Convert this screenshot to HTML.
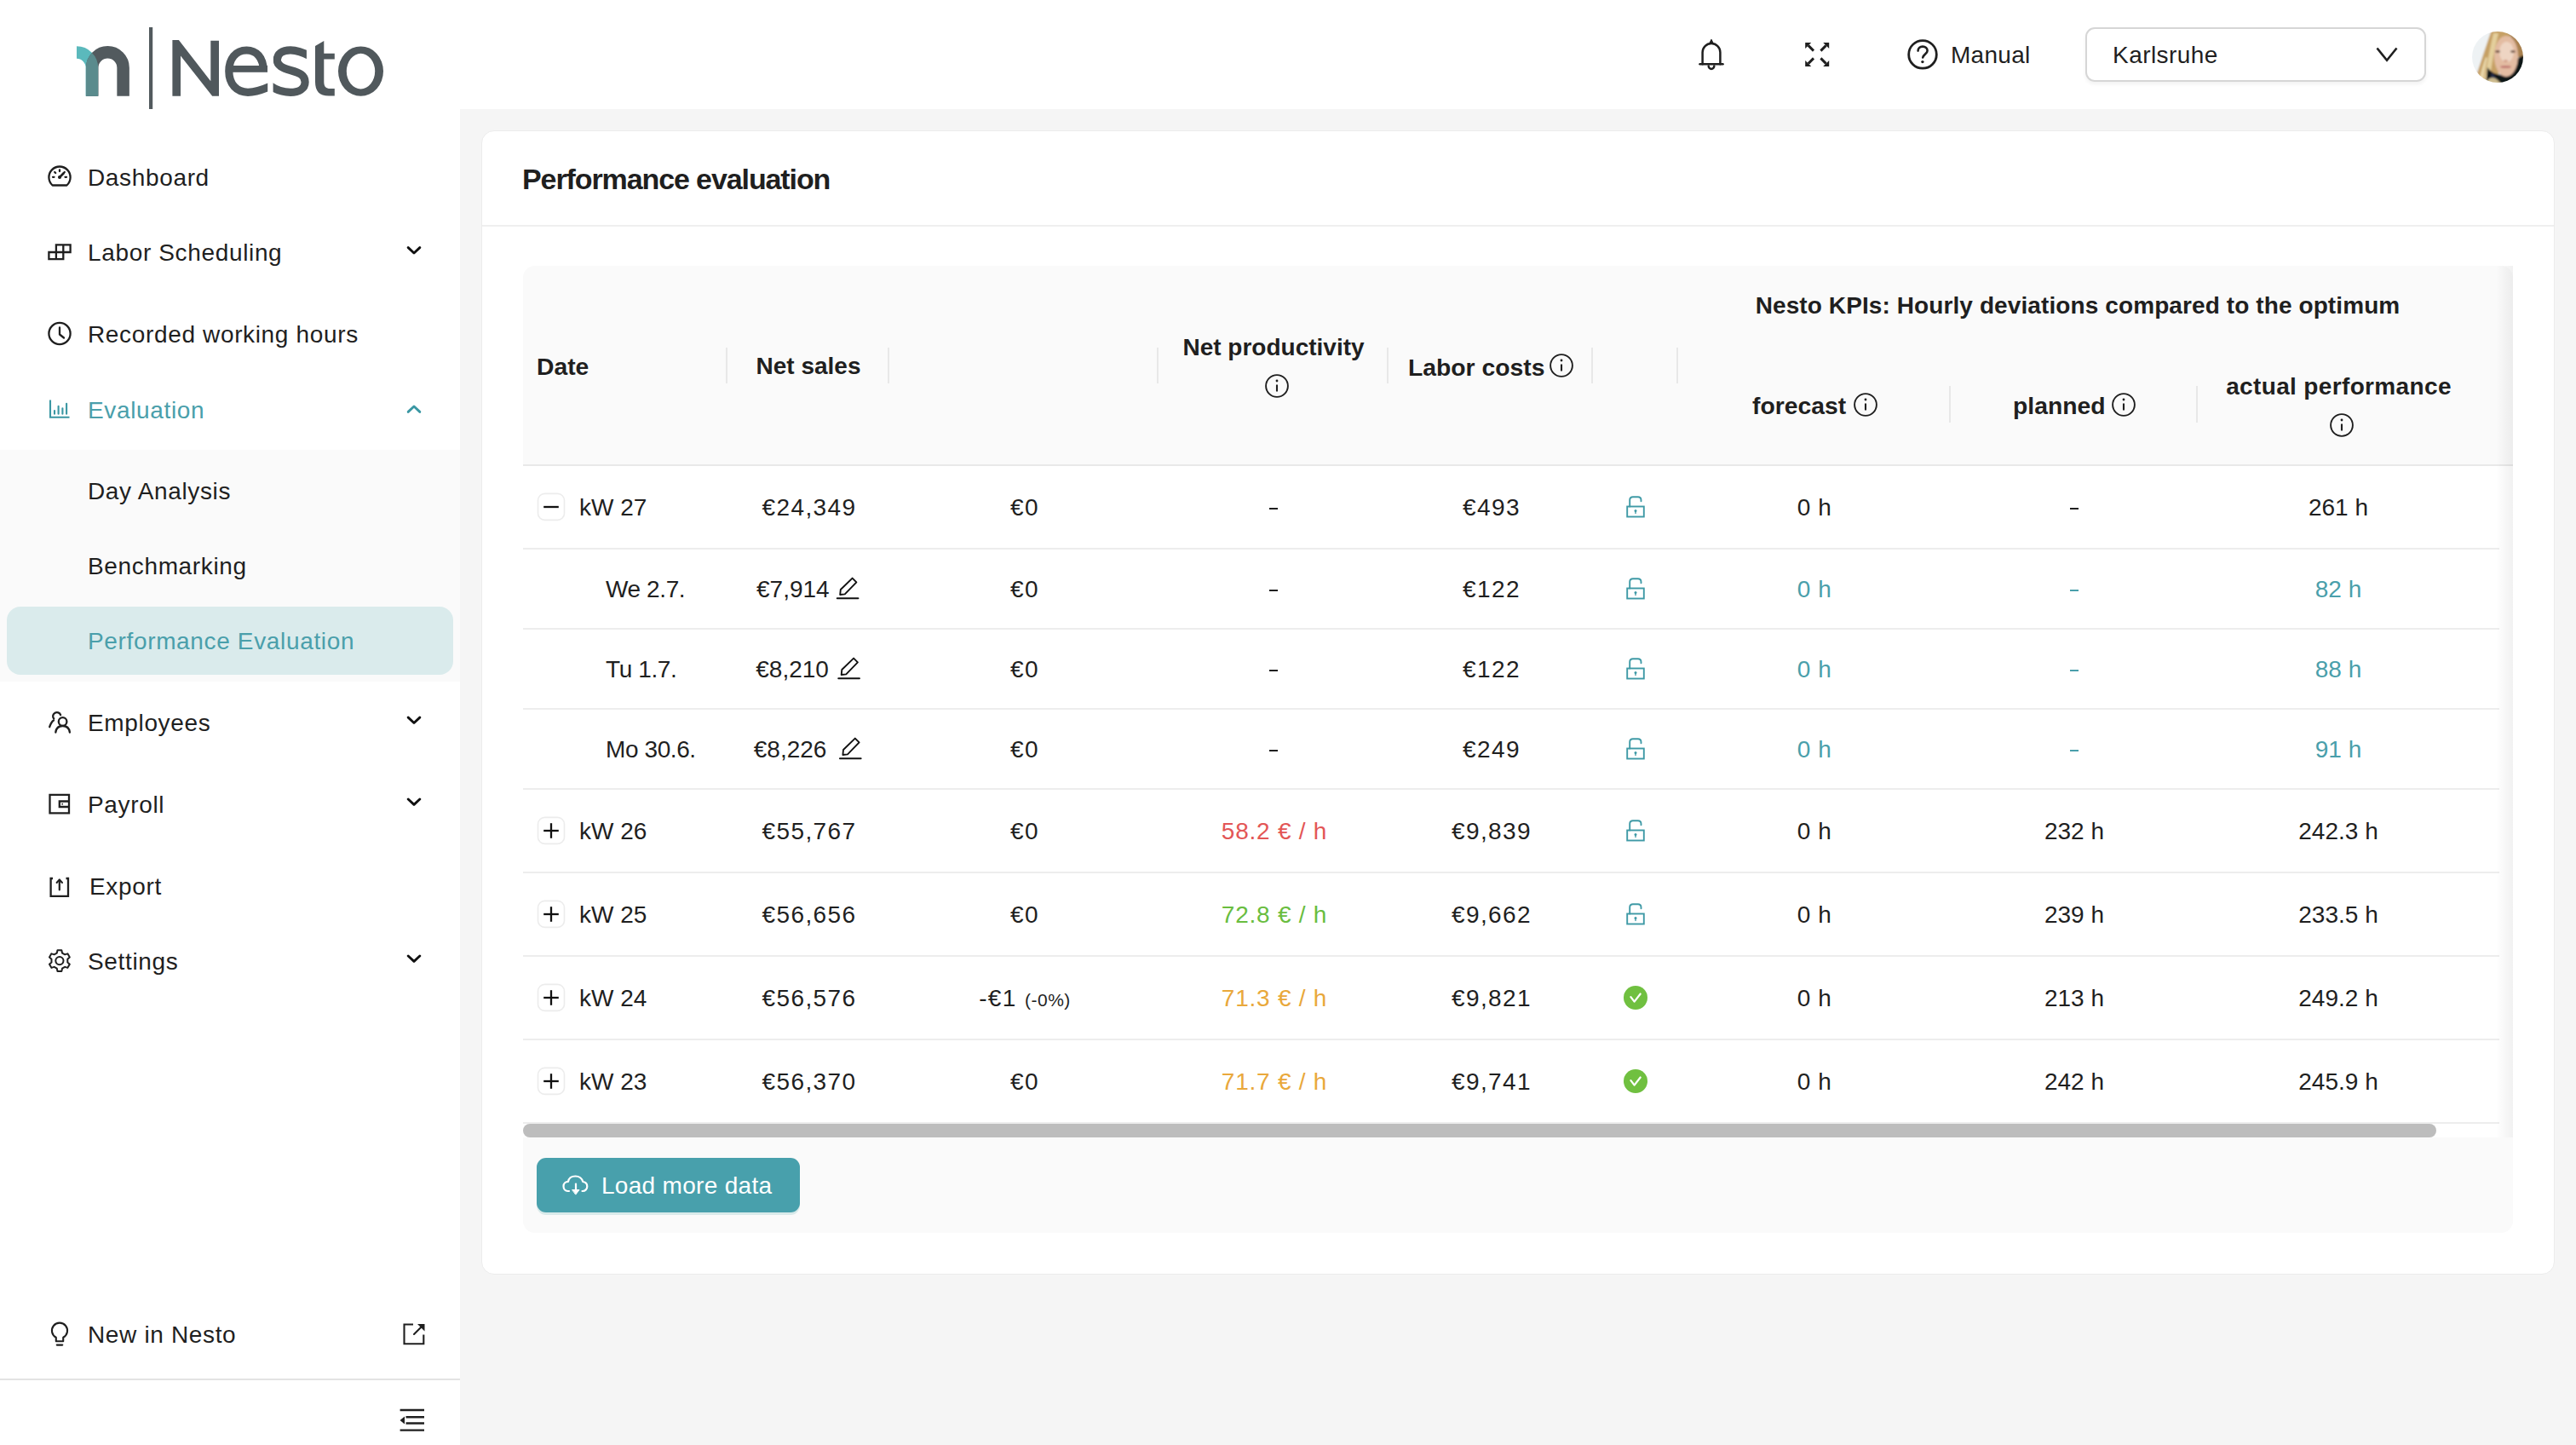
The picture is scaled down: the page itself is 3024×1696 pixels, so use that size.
<!DOCTYPE html>
<html><head><meta charset="utf-8">
<style>
*{box-sizing:border-box;margin:0;padding:0}
html,body{width:3024px;height:1696px;overflow:hidden;background:#f5f5f5;font-family:"Liberation Sans",sans-serif;color:#1f1f1f}
.abs{position:absolute}
.t{position:absolute;font-size:28px;line-height:40px;height:40px;white-space:nowrap}
.b{font-weight:700;font-size:28.3px}
.nav{letter-spacing:0.65px}
.teal{color:#4a9fab}
svg{position:absolute;overflow:visible}
.c{position:absolute;font-size:28px;line-height:40px;height:40px;white-space:nowrap;transform:translateX(-50%)}
.eur{letter-spacing:1.4px}
.sep{position:absolute;width:2px;background:#e8e8e8}
.dash{position:absolute;width:9.5px;height:2.3px;background:#1f1f1f}
</style></head><body>
<div class="abs" style="left:0;top:0;width:3024px;height:128px;background:#fff"></div>
<div class="abs" style="left:0;top:0;width:540px;height:1696px;background:#fff"></div>
<div class="abs" style="left:0;top:528px;width:540px;height:272px;background:#fafafa"></div>
<div class="abs" style="left:8px;top:712px;width:524px;height:80px;background:#daebec;border-radius:16px"></div>
<div class="abs" style="left:0;top:1618px;width:540px;height:2px;background:#e3e3e3"></div>
<div class="t nav" style="left:103px;top:189px">Dashboard</div>
<div class="t nav" style="left:103px;top:277px">Labor Scheduling</div>
<div class="t nav" style="left:103px;top:373px">Recorded working hours</div>
<div class="t nav teal" style="left:103px;top:462px">Evaluation</div>
<div class="t nav" style="left:103px;top:557px">Day Analysis</div>
<div class="t nav" style="left:103px;top:645px">Benchmarking</div>
<div class="t nav teal" style="left:103px;top:733px">Performance Evaluation</div>
<div class="t nav" style="left:103px;top:829px">Employees</div>
<div class="t nav" style="left:103px;top:925px">Payroll</div>
<div class="t nav" style="left:105px;top:1021px">Export</div>
<div class="t nav" style="left:103px;top:1109px">Settings</div>
<div class="t nav" style="left:103px;top:1547px">New in Nesto</div>
<div class="t" style="left:2290px;top:45px;letter-spacing:0.3px">Manual</div>
<div class="abs" style="left:2448px;top:32px;width:400px;height:64px;border:2px solid #d6d6d6;border-radius:11px;box-shadow:0 3px 4px rgba(0,0,0,0.05)"></div>
<div class="t" style="left:2480px;top:45px;letter-spacing:0.45px">Karlsruhe</div>
<div class="abs" style="left:565px;top:153px;width:2434px;height:1343px;background:#fff;border-radius:15px;border:1.5px solid #ececec"></div>
<div class="abs" style="left:566px;top:264px;width:2432px;height:2px;background:#efefef"></div>
<div class="t b" style="left:613px;top:190px;font-size:34px;letter-spacing:-1.1px">Performance evaluation</div>
<div class="abs" style="left:614px;top:312px;width:2336px;height:1135px;background:#fafafa;border-radius:14px"></div>
<div class="sep" style="left:852px;top:408px;height:42px"></div>
<div class="sep" style="left:1042px;top:408px;height:42px"></div>
<div class="sep" style="left:1358px;top:408px;height:42px"></div>
<div class="sep" style="left:1628px;top:408px;height:42px"></div>
<div class="sep" style="left:1868px;top:408px;height:42px"></div>
<div class="sep" style="left:1968px;top:408px;height:42px"></div>
<div class="sep" style="left:2288px;top:453px;height:43px"></div>
<div class="sep" style="left:2578px;top:453px;height:43px"></div>
<div class="abs" style="left:614px;top:545px;width:2336px;height:2px;background:#e9e9e9"></div>
<div class="t b" style="left:630px;top:410px">Date</div>
<div class="c b" style="left:949px;top:410px">Net sales</div>
<div class="c b" style="left:1495px;top:387.8px">Net productivity</div>
<div class="t b" style="left:1653px;top:410.5px">Labor costs</div>
<div class="c b" style="left:2439px;top:338.5px;letter-spacing:0.1px">Nesto KPIs: Hourly deviations compared to the optimum</div>
<div class="t b" style="left:2057px;top:456px">forecast</div>
<div class="t b" style="left:2363px;top:455.5px">planned</div>
<div class="c b" style="left:2745.5px;top:434px;letter-spacing:0.35px">actual performance</div>
<div class="abs" style="left:614px;top:547px;width:2336px;height:788px;background:#fff"></div>
<div class="abs" style="left:614px;top:643px;width:2320px;height:2px;background:#ededed"></div>
<div class="t" style="left:680px;top:576px">kW 27</div>
<div class="c eur" style="left:950px;top:576px">€24,349</div>
<div class="c eur" style="left:1203px;top:576px">€0</div>
<div class="dash" style="left:1490.25px;top:595.8px;background:#1f1f1f"></div>
<div class="c eur" style="left:1751px;top:576px">€493</div>
<div class="c" style="left:2130px;top:576px;letter-spacing:0.5px">0 h</div>
<div class="dash" style="left:2430.25px;top:595.8px;background:#1f1f1f"></div>
<div class="c" style="left:2745px;top:576px">261 h</div>
<div class="abs" style="left:614px;top:737px;width:2320px;height:2px;background:#ededed"></div>
<div class="t" style="left:711px;top:672px;letter-spacing:-0.4px">We 2.7.</div>
<div class="t" style="left:888px;top:672px;letter-spacing:0px">€7,914</div>
<div class="c eur" style="left:1203px;top:672px">€0</div>
<div class="dash" style="left:1490.25px;top:691.8px;background:#1f1f1f"></div>
<div class="c eur" style="left:1751px;top:672px">€122</div>
<div class="c teal" style="left:2130px;top:672px;letter-spacing:0.5px">0 h</div>
<div class="dash" style="left:2430.25px;top:691.8px;background:#4a9fab"></div>
<div class="c teal" style="left:2745px;top:672px">82 h</div>
<div class="abs" style="left:614px;top:831px;width:2320px;height:2px;background:#ededed"></div>
<div class="t" style="left:711px;top:766px;letter-spacing:-0.4px">Tu 1.7.</div>
<div class="t" style="left:887.3px;top:766px;letter-spacing:0px">€8,210</div>
<div class="c eur" style="left:1203px;top:766px">€0</div>
<div class="dash" style="left:1490.25px;top:785.8px;background:#1f1f1f"></div>
<div class="c eur" style="left:1751px;top:766px">€122</div>
<div class="c teal" style="left:2130px;top:766px;letter-spacing:0.5px">0 h</div>
<div class="dash" style="left:2430.25px;top:785.8px;background:#4a9fab"></div>
<div class="c teal" style="left:2745px;top:766px">88 h</div>
<div class="abs" style="left:614px;top:925px;width:2320px;height:2px;background:#ededed"></div>
<div class="t" style="left:711px;top:860px;letter-spacing:-0.4px">Mo 30.6.</div>
<div class="t" style="left:884.8px;top:860px;letter-spacing:0px">€8,226</div>
<div class="c eur" style="left:1203px;top:860px">€0</div>
<div class="dash" style="left:1490.25px;top:879.8px;background:#1f1f1f"></div>
<div class="c eur" style="left:1751px;top:860px">€249</div>
<div class="c teal" style="left:2130px;top:860px;letter-spacing:0.5px">0 h</div>
<div class="dash" style="left:2430.25px;top:879.8px;background:#4a9fab"></div>
<div class="c teal" style="left:2745px;top:860px">91 h</div>
<div class="abs" style="left:614px;top:1023px;width:2320px;height:2px;background:#ededed"></div>
<div class="t" style="left:680px;top:956px">kW 26</div>
<div class="c eur" style="left:950px;top:956px">€55,767</div>
<div class="c eur" style="left:1203px;top:956px">€0</div>
<div class="c" style="left:1496px;top:956px;color:#e35656;letter-spacing:0.75px">58.2 € / h</div>
<div class="c eur" style="left:1751px;top:956px">€9,839</div>
<div class="c" style="left:2130px;top:956px;letter-spacing:0.5px">0 h</div>
<div class="c" style="left:2435px;top:956px">232 h</div>
<div class="c" style="left:2745px;top:956px">242.3 h</div>
<div class="abs" style="left:614px;top:1121px;width:2320px;height:2px;background:#ededed"></div>
<div class="t" style="left:680px;top:1054px">kW 25</div>
<div class="c eur" style="left:950px;top:1054px">€56,656</div>
<div class="c eur" style="left:1203px;top:1054px">€0</div>
<div class="c" style="left:1496px;top:1054px;color:#69bd3f;letter-spacing:0.75px">72.8 € / h</div>
<div class="c eur" style="left:1751px;top:1054px">€9,662</div>
<div class="c" style="left:2130px;top:1054px;letter-spacing:0.5px">0 h</div>
<div class="c" style="left:2435px;top:1054px">239 h</div>
<div class="c" style="left:2745px;top:1054px">233.5 h</div>
<div class="abs" style="left:614px;top:1219px;width:2320px;height:2px;background:#ededed"></div>
<div class="t" style="left:680px;top:1152px">kW 24</div>
<div class="c eur" style="left:950px;top:1152px">€56,576</div>
<div class="c eur" style="left:1203px;top:1152px">-€1 <span style="font-size:21px;letter-spacing:0.5px">(-0%)</span></div>
<div class="c" style="left:1496px;top:1152px;color:#e9a83b;letter-spacing:0.75px">71.3 € / h</div>
<div class="c eur" style="left:1751px;top:1152px">€9,821</div>
<div class="c" style="left:2130px;top:1152px;letter-spacing:0.5px">0 h</div>
<div class="c" style="left:2435px;top:1152px">213 h</div>
<div class="c" style="left:2745px;top:1152px">249.2 h</div>
<div class="abs" style="left:614px;top:1317px;width:2320px;height:2px;background:#ededed"></div>
<div class="t" style="left:680px;top:1250px">kW 23</div>
<div class="c eur" style="left:950px;top:1250px">€56,370</div>
<div class="c eur" style="left:1203px;top:1250px">€0</div>
<div class="c" style="left:1496px;top:1250px;color:#e9a83b;letter-spacing:0.75px">71.7 € / h</div>
<div class="c eur" style="left:1751px;top:1250px">€9,741</div>
<div class="c" style="left:2130px;top:1250px;letter-spacing:0.5px">0 h</div>
<div class="c" style="left:2435px;top:1250px">242 h</div>
<div class="c" style="left:2745px;top:1250px">245.9 h</div>
<div class="abs" style="left:614px;top:1319px;width:2246px;height:16px;background:#bdbdbd;border-radius:8px"></div>
<div class="abs" style="left:2930px;top:312px;width:20px;height:1023px;background:linear-gradient(to right,rgba(0,0,0,0),rgba(0,0,0,0.055))"></div>
<div class="abs" style="left:630px;top:1359px;width:309px;height:64px;background:#48a0ac;border-radius:11px;box-shadow:0 3px 0 #d9eaea"></div>
<div class="t" style="left:706px;top:1372px;color:#fff;letter-spacing:0.3px">Load more data</div>
<svg width="3024" height="1696" style="left:0;top:0" viewBox="0 0 3024 1696">
<defs><mask id="archm" maskUnits="userSpaceOnUse" x="0" y="0" width="600" height="200"><path d="M108.2,113 V79.5 A18.2,18.2 0 0 1 144.6,79.5 V113" stroke="#fff" stroke-width="14.5" fill="none"/></mask></defs>
<g id="logo">
<path d="M90,61.6 A17.9,17.9 0 0 1 107.9,79.5 V112.8" stroke="#5bb9bc" stroke-width="14.5" fill="none"/>
<path d="M108.2,112.8 V79.5 A18.2,18.2 0 0 1 144.6,79.5 V112.8" stroke="#525a5e" stroke-width="14.5" fill="none"/>
<path d="M90,61.6 A17.9,17.9 0 0 1 107.9,79.5 V112.8" stroke="#5a8b8d" stroke-width="14.5" fill="none" mask="url(#archm)"/>
<rect x="175" y="32" width="4.2" height="96" fill="#525a5e"/>
<g fill="#50585c">
<path d="M202.4,112.8 V47 H209.9 L247.3,95.3 V47.7 H257 V112.8 H249.2 L212,65.4 V112.8 Z"/>
<path d="M397,83.6 A26.5,29.2 0 1 0 450,83.6 A26.5,29.2 0 1 0 397,83.6 Z M406.8,83.6 A16.7,20.8 0 1 1 440.2,83.6 A16.7,20.8 0 1 1 406.8,83.6 Z" fill-rule="evenodd"/>
<path d="M370,53.9 L380.3,48 V62.8 H392.8 V69.6 H380.3 V96 C380.3,102 383,104 387.5,104 H392.8 V112.6 H386 C375,112.6 370,107 370,96 Z"/>
<rect x="268" y="77" width="46" height="7.8"/>
</g>
<defs><clipPath id="eclip"><rect x="255" y="40" width="59.2" height="80"/></clipPath><clipPath id="sclip"><path d="M320.6,40 H359.9 V74 H372 V120 H320.6 Z"/></clipPath></defs>
<g stroke="#50585c" fill="none" stroke-width="9.2">
<path clip-path="url(#eclip)" d="M309.4,84 C309.4,67 300.5,59 289.5,59 C276.5,59 268.8,69 268.8,83.6 C268.8,99 278,108.3 291,108.3 C299,108.3 306,106.5 318,101"/>
<path clip-path="url(#sclip)" d="M364,66 C356,61.5 347.5,58.8 341,58.8 C331,58.8 325.3,63.5 325.3,70.3 C325.3,77 331.5,79.7 341,82.5 C352,85.5 358.1,88.5 358.1,96.2 C358.1,104 351,108.3 341,108.3 C332,108.3 324,105.5 317,100.5"/>
</g>
</g>
<g id="sideicons" fill="none" stroke="#1f1f1f" stroke-width="2.3" stroke-linecap="round" stroke-linejoin="round">
<path d="M61.6,217.5 A12.6,12.6 0 1 1 78.4,217.5 Z"/>
<path d="M70,199.5 V201 M62,207.8 H63.5 M76.5,207.8 H78 M64.2,202 L65.2,203 M75.8,202 L74.8,203"/>
<path d="M70,208 L74.5,203.5" stroke-width="2.6"/>
<circle cx="70" cy="208" r="0.9" fill="#1f1f1f"/>
<path d="M65.9,287.4 H82.6 V296 H65.9 Z M74.3,287.4 V304.2 M57.4,296 H74.3 V304.2 H57.4 Z M65.9,296 V304.2" stroke-linecap="butt" stroke-linejoin="miter"/>
<circle cx="70" cy="391.5" r="12.6"/>
<path d="M70,384.5 V392.5 L75,396.5"/>
<path d="M59,469.5 V489.7 H81.5" stroke="#3a97a3" stroke-width="2.1" stroke-linecap="butt" stroke-linejoin="miter"/>
<path d="M64,482 V485.8 M68.6,476.8 V485.8 M73.4,479.2 V485.8 M78.1,473.8 V485.8" stroke="#3a97a3" stroke-width="2.1"/>
<path d="M63.2,843.6 A4.6,4.6 0 1 1 71.1,839.2"/>
<path d="M58.2,853.2 C59.5,849 61.5,846.5 63,845.5"/>
<circle cx="73.6" cy="847" r="4.8"/>
<path d="M65.3,859.5 C66,854.5 69.3,852 73.6,852 C77.9,852 81.2,854.5 81.9,859.5"/>
<path d="M58.5,932.8 H81 V954.3 H58.5 Z" stroke-linecap="butt" stroke-linejoin="miter"/>
<path d="M81,940.5 H69.8 V947 H81" stroke-linecap="butt" stroke-linejoin="miter"/>
<circle cx="73.2" cy="943.7" r="0.9" fill="#1f1f1f" stroke="none"/>
<path d="M62,1031 H59.6 V1051.8 H80 V1031 H77.5" stroke-linecap="butt" stroke-linejoin="miter"/>
<path d="M69.8,1044.5 V1033" stroke-width="2.2"/>
<path d="M66.6,1036 L69.8,1032.3 L73,1036" stroke-width="2"/>
<path d="M66.77,1118.52 L67.50,1115.23 L72.30,1115.23 L73.03,1118.52 L76.20,1120.35 L79.41,1119.33 L81.81,1123.50 L79.32,1125.77 L79.32,1129.43 L81.81,1131.70 L79.41,1135.87 L76.20,1134.85 L73.03,1136.68 L72.30,1139.97 L67.50,1139.97 L66.77,1136.68 L63.60,1134.85 L60.39,1135.87 L57.99,1131.70 L60.48,1129.43 L60.48,1125.77 L57.99,1123.50 L60.39,1119.33 L63.60,1120.35 Z" stroke-width="2"/>
<circle cx="69.9" cy="1127.6" r="4.6" stroke-width="2"/>
<path d="M65.8,1574.2 V1569.8 A9.1,9.1 0 1 1 74.2,1569.8 V1574.2 Z" stroke-width="2.1"/>
<path d="M66.8,1578.6 H73.2" stroke-width="2.2"/>
<path d="M485,1554.5 H474.5 V1577.3 H497.3 V1566.5" stroke-width="2.1" stroke-linecap="butt" stroke-linejoin="miter"/>
<path d="M486,1566 L496,1556" stroke-width="2.1"/>
<path d="M490,1554 H498.5 V1562.5 Z" fill="#1f1f1f" stroke="none"/>
<path d="M469.6,1655 H498 M476.5,1663.2 H498 M476.5,1670.5 H498 M469.6,1678.6 H498" stroke-width="2.4" stroke-linecap="butt"/>
<path d="M469.5,1667 L475,1662.5 V1671.5 Z" fill="#1f1f1f" stroke="none"/>
<path d="M479.2,290.6 L486,297.0 L492.8,290.6 M479.2,842.1 L486,848.5 L492.8,842.1 M479.2,938 L486,944.4 L492.8,938 M479.2,1122 L486,1128.4 L492.8,1122" stroke="#111" stroke-width="2.9"/>
<path d="M479.2,483.4 L486,477 L492.8,483.4" stroke="#3a97a3" stroke-width="2.9"/>
</g>
<g id="hdricons" fill="none" stroke="#1f1f1f" stroke-width="2.5" stroke-linecap="round" stroke-linejoin="round">
<path d="M1998.6,75.2 V61.5 A10.4,10.4 0 0 1 2019.4,61.5 V75.2"/>
<path d="M1995.5,75.2 H2022.5"/>
<path d="M2005.7,77.6 A3.3,3.3 0 0 0 2012.3,77.6"/>
<path d="M2009,46.5 L2011.2,51 H2006.8 Z" fill="#1f1f1f" stroke-width="1.2"/>
<path d="M2129,59.6 L2122.8,53.4 M2137.4,59.6 L2143.6,53.4 M2129,68.4 L2122.8,74.6 M2137.4,68.4 L2143.6,74.6" stroke-width="2.9" stroke-linecap="butt"/>
<path d="M2119.2,50 H2126.2 L2119.2,57 Z M2147.2,50 H2140.2 L2147.2,57 Z M2119.2,78 H2126.2 L2119.2,71 Z M2147.2,78 H2140.2 L2147.2,71 Z" fill="#1f1f1f" stroke="none"/>
<circle cx="2257" cy="63.9" r="16.3" stroke-width="2.8"/>
<path d="M2251.6,59.6 C2251.6,56.6 2254,54.6 2257,54.6 C2260.3,54.6 2262.6,56.8 2262.6,59.6 C2262.6,62.8 2258.3,63.5 2257.2,67.5" stroke-width="2.6"/>
<circle cx="2256.9" cy="72.6" r="1.7" fill="#1f1f1f" stroke="none"/>
<path d="M2790.5,56.5 L2802,70.8 L2813.5,56.5" stroke-width="2.6" stroke-linecap="butt" stroke-linejoin="miter"/>
</g>
<defs><clipPath id="avc"><circle cx="2932" cy="67" r="30"/></clipPath><filter id="avb" x="-20%" y="-20%" width="140%" height="140%"><feGaussianBlur stdDeviation="1.3"/></filter></defs>
<g clip-path="url(#avc)"><g filter="url(#avb)" transform="translate(2898,33)">
<rect x="0" y="0" width="68" height="68" fill="#eef2f4"/>
<path d="M27,2 L56,2 C47,10 40,20 37,30 C34,42 35,54 37,68 L5,68 C11,50 18,28 27,2 Z" fill="#c6a065"/>
<path d="M29,6 C25,24 21,44 18,64 L24,66 C26,46 30,26 35,6 Z" fill="#e4cf9c"/>
<path d="M12,62 C14,52 17,42 20,34 L22,35 C20,44 18,54 17,66 Z" fill="#e8d6a8"/>
<path d="M42,2 C50,8 55,20 55,34 L68,34 L68,2 Z" fill="#a98150"/>
<path d="M22,46 C28,54 36,56 44,54 C50,52 54,46 56,36 L68,30 L68,68 L20,68 Z" fill="#111216"/>
<path d="M27,52 C31,56 34,61 35,68 L25,68 Z" fill="#283050"/>
<path d="M20,64 C24,56 32,56 38,66 L38,68 L18,68 Z" fill="#cdbb8e"/>
<ellipse cx="44" cy="33" rx="14" ry="24" fill="#e3bca2"/>
<ellipse cx="44.5" cy="28" rx="8.5" ry="12" fill="#eed5c3"/>
<ellipse cx="34" cy="27.5" rx="3" ry="1.2" fill="#5d4032"/>
<ellipse cx="52" cy="27.5" rx="3" ry="1.2" fill="#5d4032"/>
<ellipse cx="43.5" cy="38.5" rx="2.6" ry="1.5" fill="#d4a28b"/>
<ellipse cx="43.5" cy="45.5" rx="6.5" ry="1.6" fill="#c27d75"/>
</g></g>
<g id="tblicons" fill="none" stroke-linecap="round" stroke-linejoin="round">
<circle cx="1499" cy="453" r="12.9" stroke="#1f1f1f" stroke-width="1.9"/>
<circle cx="1499" cy="447" r="1.4" fill="#1f1f1f"/>
<path d="M1499,451.5 V459.5" stroke="#1f1f1f" stroke-width="2.1" stroke-linecap="butt"/>
<circle cx="1833" cy="429" r="12.9" stroke="#1f1f1f" stroke-width="1.9"/>
<circle cx="1833" cy="423" r="1.4" fill="#1f1f1f"/>
<path d="M1833,427.5 V435.5" stroke="#1f1f1f" stroke-width="2.1" stroke-linecap="butt"/>
<circle cx="2190" cy="475" r="12.9" stroke="#1f1f1f" stroke-width="1.9"/>
<circle cx="2190" cy="469" r="1.4" fill="#1f1f1f"/>
<path d="M2190,473.5 V481.5" stroke="#1f1f1f" stroke-width="2.1" stroke-linecap="butt"/>
<circle cx="2493" cy="475" r="12.9" stroke="#1f1f1f" stroke-width="1.9"/>
<circle cx="2493" cy="469" r="1.4" fill="#1f1f1f"/>
<path d="M2493,473.5 V481.5" stroke="#1f1f1f" stroke-width="2.1" stroke-linecap="butt"/>
<circle cx="2749" cy="499" r="12.9" stroke="#1f1f1f" stroke-width="1.9"/>
<circle cx="2749" cy="493" r="1.4" fill="#1f1f1f"/>
<path d="M2749,497.5 V505.5" stroke="#1f1f1f" stroke-width="2.1" stroke-linecap="butt"/>
<rect x="631.5" y="579.4" width="31" height="31" rx="8" fill="#fff" stroke="#ececec" stroke-width="1.6"/>
<path d="M638.2,595.0 H655.8" stroke="#111" stroke-width="2.3" stroke-linecap="butt"/>
<rect x="1910.2" y="594.5" width="19.6" height="12" stroke="#3f9aa6" stroke-width="1.9" stroke-linejoin="miter"/>
<path d="M1913.2,594.5 V587.0 Q1913.2,583.3 1917,583.3 H1922.8 Q1926.5,583.3 1926.5,587.0 V588.2" stroke="#3f9aa6" stroke-width="1.9"/>
<circle cx="1920" cy="599.6" r="1.5" fill="#3f9aa6"/><path d="M1920,600.0 V602.6" stroke="#3f9aa6" stroke-width="1.4"/>
<rect x="1910.2" y="690.5" width="19.6" height="12" stroke="#3f9aa6" stroke-width="1.9" stroke-linejoin="miter"/>
<path d="M1913.2,690.5 V683.0 Q1913.2,679.3 1917,679.3 H1922.8 Q1926.5,679.3 1926.5,683.0 V684.2" stroke="#3f9aa6" stroke-width="1.9"/>
<circle cx="1920" cy="695.6" r="1.5" fill="#3f9aa6"/><path d="M1920,696.0 V698.6" stroke="#3f9aa6" stroke-width="1.4"/>
<path d="M982.8,702.3 H1007.4" stroke="#111" stroke-width="2.1"/>
<path d="M986.2,698.0 L986.8,692.0 L1000.6,678.6 L1005.4,683.4 L991.8,697.4 Z" stroke="#111" stroke-width="1.9"/>
<rect x="1910.2" y="784.5" width="19.6" height="12" stroke="#3f9aa6" stroke-width="1.9" stroke-linejoin="miter"/>
<path d="M1913.2,784.5 V777.0 Q1913.2,773.3 1917,773.3 H1922.8 Q1926.5,773.3 1926.5,777.0 V778.2" stroke="#3f9aa6" stroke-width="1.9"/>
<circle cx="1920" cy="789.6" r="1.5" fill="#3f9aa6"/><path d="M1920,790.0 V792.6" stroke="#3f9aa6" stroke-width="1.4"/>
<path d="M984.3,796.3 H1008.9" stroke="#111" stroke-width="2.1"/>
<path d="M987.7,792.0 L988.3,786.0 L1002.1,772.6 L1006.9,777.4 L993.3,791.4 Z" stroke="#111" stroke-width="1.9"/>
<rect x="1910.2" y="878.5" width="19.6" height="12" stroke="#3f9aa6" stroke-width="1.9" stroke-linejoin="miter"/>
<path d="M1913.2,878.5 V871.0 Q1913.2,867.3 1917,867.3 H1922.8 Q1926.5,867.3 1926.5,871.0 V872.2" stroke="#3f9aa6" stroke-width="1.9"/>
<circle cx="1920" cy="883.6" r="1.5" fill="#3f9aa6"/><path d="M1920,884.0 V886.6" stroke="#3f9aa6" stroke-width="1.4"/>
<path d="M986,890.3 H1010.6" stroke="#111" stroke-width="2.1"/>
<path d="M989.4,886.0 L990.0,880.0 L1003.8,866.6 L1008.6,871.4 L995.0,885.4 Z" stroke="#111" stroke-width="1.9"/>
<rect x="631.5" y="959.4" width="31" height="31" rx="8" fill="#fff" stroke="#ececec" stroke-width="1.6"/>
<path d="M638.2,975.0 H655.8" stroke="#111" stroke-width="2.3" stroke-linecap="butt"/>
<path d="M647,966.2 V983.8" stroke="#111" stroke-width="2.3" stroke-linecap="butt"/>
<rect x="1910.2" y="974.5" width="19.6" height="12" stroke="#3f9aa6" stroke-width="1.9" stroke-linejoin="miter"/>
<path d="M1913.2,974.5 V967.0 Q1913.2,963.3 1917,963.3 H1922.8 Q1926.5,963.3 1926.5,967.0 V968.2" stroke="#3f9aa6" stroke-width="1.9"/>
<circle cx="1920" cy="979.6" r="1.5" fill="#3f9aa6"/><path d="M1920,980.0 V982.6" stroke="#3f9aa6" stroke-width="1.4"/>
<rect x="631.5" y="1057.4" width="31" height="31" rx="8" fill="#fff" stroke="#ececec" stroke-width="1.6"/>
<path d="M638.2,1073.0 H655.8" stroke="#111" stroke-width="2.3" stroke-linecap="butt"/>
<path d="M647,1064.2 V1081.8" stroke="#111" stroke-width="2.3" stroke-linecap="butt"/>
<rect x="1910.2" y="1072.5" width="19.6" height="12" stroke="#3f9aa6" stroke-width="1.9" stroke-linejoin="miter"/>
<path d="M1913.2,1072.5 V1065.0 Q1913.2,1061.3 1917,1061.3 H1922.8 Q1926.5,1061.3 1926.5,1065.0 V1066.2" stroke="#3f9aa6" stroke-width="1.9"/>
<circle cx="1920" cy="1077.6" r="1.5" fill="#3f9aa6"/><path d="M1920,1078.0 V1080.6" stroke="#3f9aa6" stroke-width="1.4"/>
<rect x="631.5" y="1155.4" width="31" height="31" rx="8" fill="#fff" stroke="#ececec" stroke-width="1.6"/>
<path d="M638.2,1171.0 H655.8" stroke="#111" stroke-width="2.3" stroke-linecap="butt"/>
<path d="M647,1162.2 V1179.8" stroke="#111" stroke-width="2.3" stroke-linecap="butt"/>
<circle cx="1920" cy="1171.0" r="14" fill="#70c040"/>
<path d="M1914.4,1170.1 L1918.6,1175.6 L1925.7,1166.5" stroke="#fff" stroke-width="2.2"/>
<rect x="631.5" y="1253.4" width="31" height="31" rx="8" fill="#fff" stroke="#ececec" stroke-width="1.6"/>
<path d="M638.2,1269.0 H655.8" stroke="#111" stroke-width="2.3" stroke-linecap="butt"/>
<path d="M647,1260.2 V1277.8" stroke="#111" stroke-width="2.3" stroke-linecap="butt"/>
<circle cx="1920" cy="1269.0" r="14" fill="#70c040"/>
<path d="M1914.4,1268.1 L1918.6,1273.6 L1925.7,1264.5" stroke="#fff" stroke-width="2.2"/>
<path d="M668,1398 H666.5 C663.5,1398 661.5,1395.5 661.5,1392.3 C661.5,1389 664,1386.8 667,1386.8 C667.8,1382.5 671.5,1380.5 675.5,1380.5 C680,1380.5 683.3,1383.5 684.3,1387 C687.5,1387.5 689.3,1389.8 689.3,1392.5 C689.3,1395.5 687,1398 684,1398 H683.5" stroke="#fff" stroke-width="2.2"/>
<path d="M676,1389.5 V1399" stroke="#fff" stroke-width="2.2"/>
<path d="M672,1396.5 H680 L676,1401.8 Z" fill="#fff" stroke="#fff" stroke-width="1"/>
</g>
</svg>
</body></html>
